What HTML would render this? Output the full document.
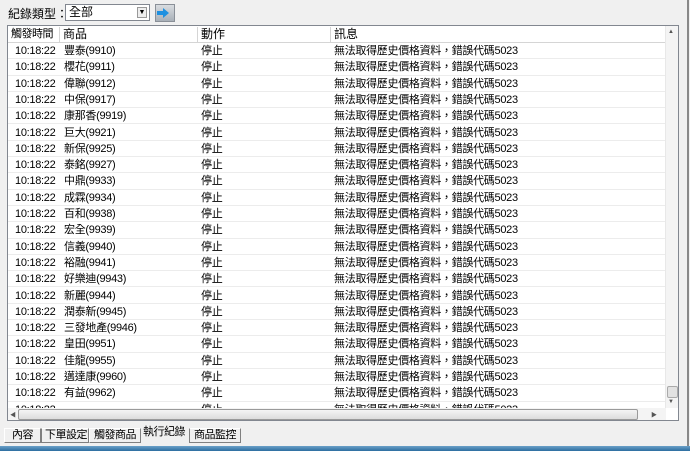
<!DOCTYPE html>
<html><head><meta charset="utf-8"><style>
*{margin:0;padding:0;box-sizing:border-box}
body{width:690px;height:451px;background:#f0f0f0;font-family:"Liberation Sans","Noto Sans CJK TC",sans-serif;font-size:12px;color:#000;position:relative;overflow:hidden}
.a{position:absolute;white-space:nowrap}
.list{position:absolute;left:7px;top:25px;width:672px;height:396px;background:#fff;border:1px solid #828790;overflow:hidden}
.hdr{position:absolute;left:0;top:0;width:658px;height:17px;background:#fff;border-bottom:1px solid #d5d5d5}
.hdr div{position:absolute;top:1px;height:15px;border-right:1px solid #d5d5d5;padding-left:3px;line-height:15px;white-space:nowrap}
.row{position:absolute;left:0;width:658px;height:16.3px;border-bottom:1px solid #ececec;line-height:16px;font-size:11px;letter-spacing:-0.3px}
.row span{position:absolute;top:0;white-space:nowrap}
.vs{position:absolute;right:0;top:0;width:13px;height:382px;background:#f4f4f4;border-left:1px solid #e8e8e8}
.hs{position:absolute;left:0;top:382px;width:658px;height:13px;background:#f4f4f4}
.tab{position:absolute;top:428px;height:15px;border:1px solid #808080;border-top-color:#fff;border-left-color:#fff;line-height:13px;padding:0 3px;font-size:11px;white-space:nowrap;overflow:hidden;letter-spacing:-0.5px;text-align:center}
</style></head><body>
<div class="a" style="left:8px;top:5px;font-size:12px">紀錄類型：</div>
<div class="a" style="left:65px;top:4px;width:85px;height:17px;background:#fff;border:1px solid #828790;padding-left:3px;line-height:15px">全部</div>
<div class="a" style="left:137px;top:7px;width:10px;height:11px;border:1px solid #999;background:#eee;font-size:7px;text-align:center;line-height:9px">▼</div>
<div class="a" style="left:155px;top:4px;width:20px;height:18px;background:linear-gradient(#d8dce0,#a8b0b8);border:1px solid #8a9098"></div>
<div class="a" style="left:157px;top:8px;width:12px;height:10px;background:#1e90e0;clip-path:polygon(0 30%,50% 30%,50% 0,100% 50%,50% 100%,50% 70%,0 70%)"></div>
<div class="list">
<div class="hdr">
<div style="left:0;width:52px;font-size:11px;letter-spacing:-0.5px">觸發時間</div>
<div style="left:52px;width:138px">商品</div>
<div style="left:190px;width:133px">動作</div>
<div style="left:323px;width:335px;border-right:none">訊息</div>
</div>
<div id="rows"></div>
<div class="vs">
<div class="a" style="left:2px;top:3px;font-size:6px;color:#555">▲</div>
<div class="a" style="left:1px;top:360px;width:11px;height:12px;background:#e2e2e2;border:1px solid #aaa;border-radius:2px"></div>
<div class="a" style="left:2px;top:373px;font-size:6px;color:#555">▼</div>
</div>
<div class="hs">
<div class="a" style="left:2px;top:2px;font-size:6px;color:#555">◀</div>
<div class="a" style="left:10px;top:1px;width:620px;height:11px;background:linear-gradient(#f4f4f4,#dcdcdc);border:1px solid #9a9a9a;border-radius:2px"></div>
<div class="a" style="left:643px;top:2px;font-size:6px;color:#555">▶</div>
</div>
</div>
<div class="a" style="left:687px;top:0;width:2px;height:446px;background:#888"></div>
<div class="tab" style="left:4px;width:37px">內容</div>
<div class="tab" style="left:41px;width:48px;border-left-color:#808080">下單設定</div>
<div class="tab" style="left:89px;width:52px">觸發商品</div>
<div class="a" style="left:143px;top:426px;line-height:13px;font-size:11px;letter-spacing:-0.5px">執行紀錄</div>
<div class="tab" style="left:189px;width:52px;border-left-color:#808080">商品監控</div>
<div class="a" style="left:0;top:446px;width:690px;height:5px;background:linear-gradient(#6aa0c8,#2d6ea0)"></div>
<script>
var d=[["豐泰(9910)"],["櫻花(9911)"],["偉聯(9912)"],["中保(9917)"],["康那香(9919)"],["巨大(9921)"],["新保(9925)"],["泰銘(9927)"],["中鼎(9933)"],["成霖(9934)"],["百和(9938)"],["宏全(9939)"],["信義(9940)"],["裕融(9941)"],["好樂迪(9943)"],["新麗(9944)"],["潤泰新(9945)"],["三發地產(9946)"],["皇田(9951)"],["佳龍(9955)"],["邁達康(9960)"],["有益(9962)"],["",""]];
var h="";for(var i=0;i<d.length;i++){var t=17+i*16.3;h+='<div class="row" style="top:'+t+'px"><span style="left:7px">10:18:22</span><span style="left:56px">'+d[i][0]+'</span><span style="left:193px">停止</span><span style="left:326px">無法取得歷史價格資料，錯誤代碼5023</span></div>';}
document.getElementById("rows").innerHTML=h;
</script>
</body></html>
